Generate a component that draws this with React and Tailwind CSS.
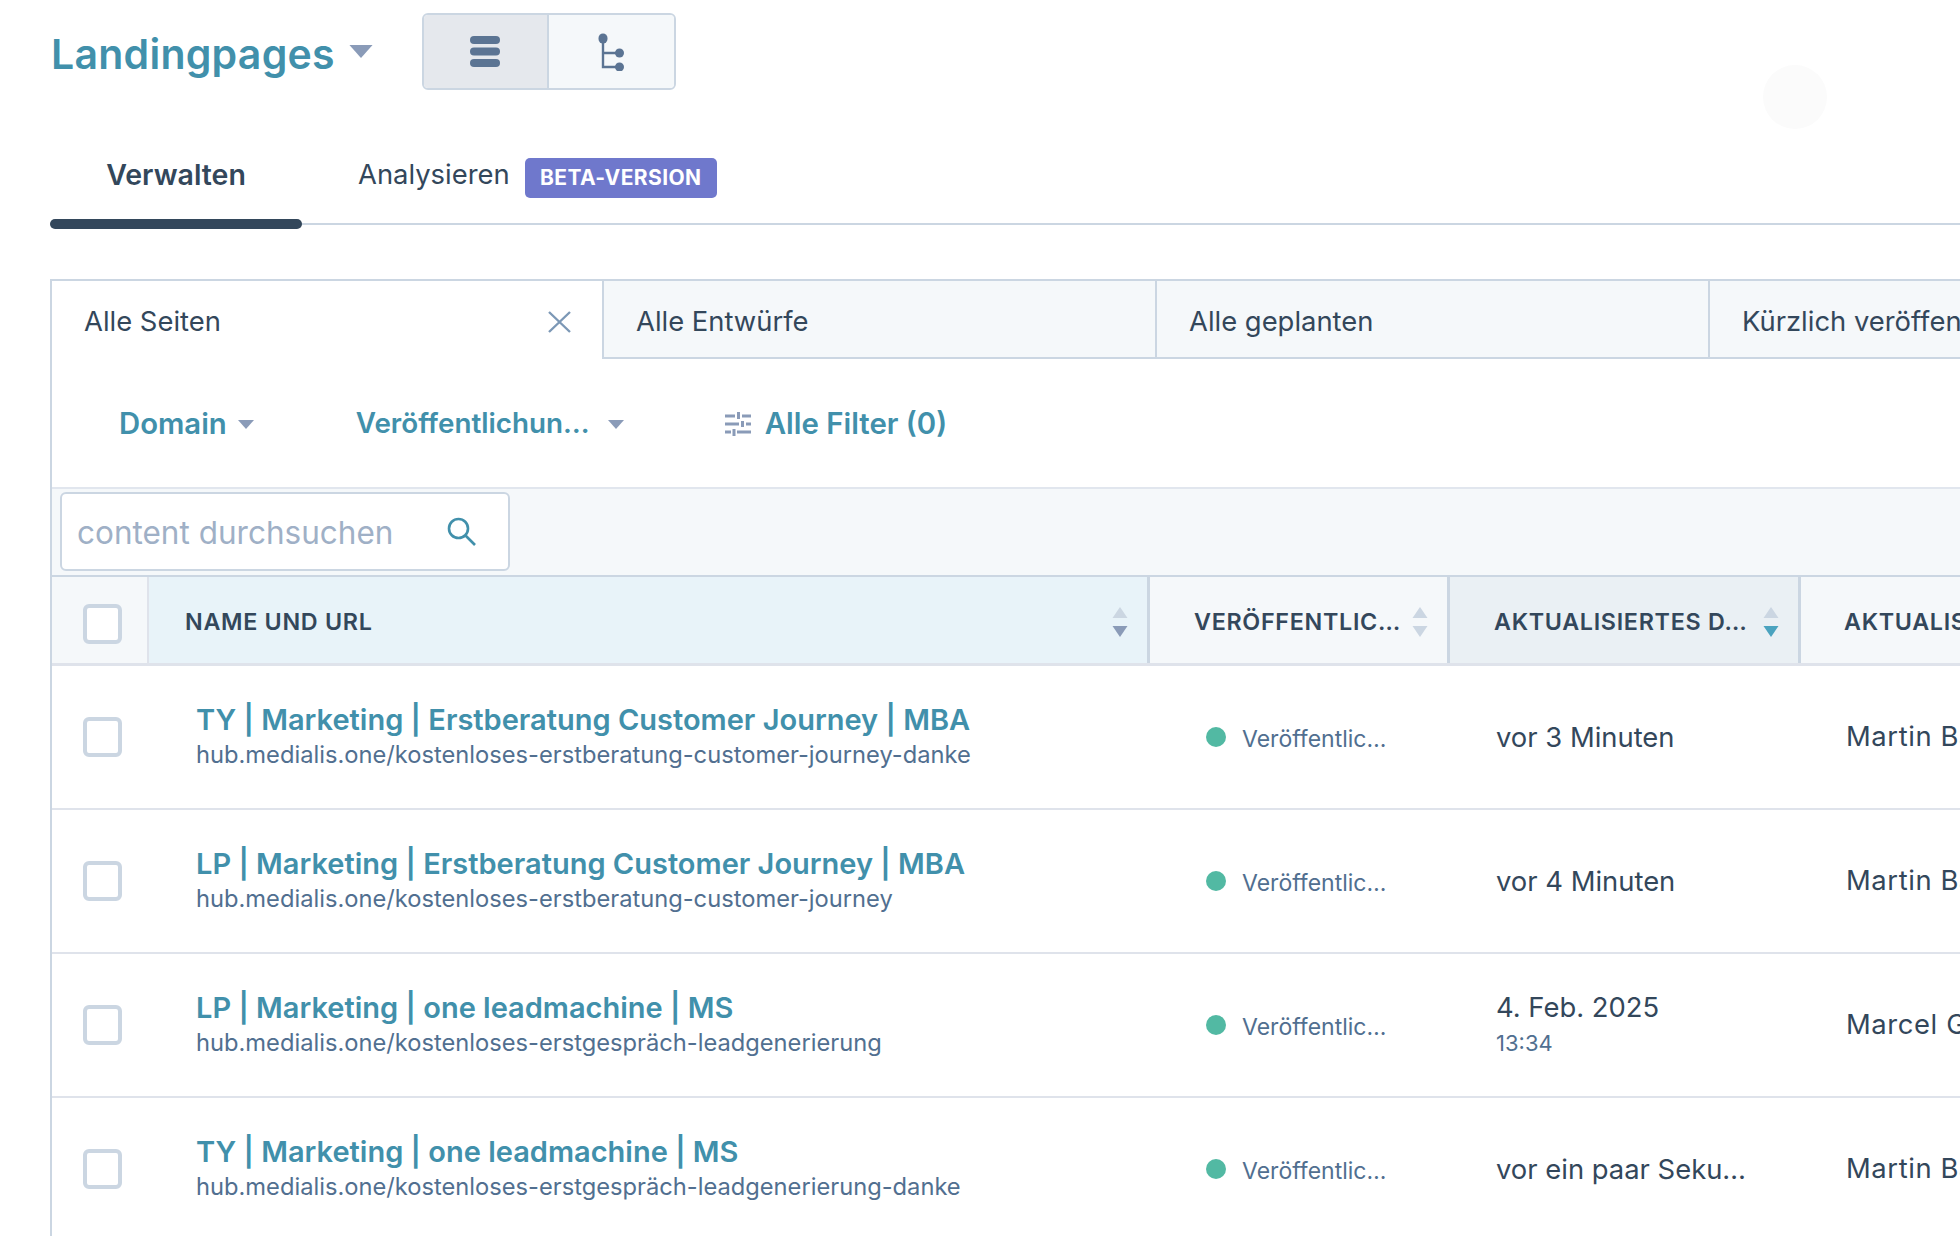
import React from 'react';

const rows = [
  { title: 'TY | Marketing | Erstberatung Customer Journey | MBA', url: 'hub.medialis.one/kostenloses-erstberatung-customer-journey-danke', date: 'vor 3 Minuten', author: 'Martin Bauer' },
  { title: 'LP | Marketing | Erstberatung Customer Journey | MBA', url: 'hub.medialis.one/kostenloses-erstberatung-customer-journey', date: 'vor 4 Minuten', author: 'Martin Bauer' },
  { title: 'LP | Marketing | one leadmachine | MS', url: 'hub.medialis.one/kostenloses-erstgespräch-leadgenerierung', date: '4. Feb. 2025', time: '13:34', author: 'Marcel Graf' },
  { title: 'TY | Marketing | one leadmachine | MS', url: 'hub.medialis.one/kostenloses-erstgespräch-leadgenerierung-danke', date: 'vor ein paar Seku…', author: 'Martin Bauer' },
];

function Caret({ big }) {
  return (
    <svg width={big ? 24 : 16} height={big ? 13 : 9} viewBox="0 0 16 9" className="shrink-0">
      <path d="M0 0h16L8 9z" fill="#8a9bb8" />
    </svg>
  );
}

function SortArrows({ up = '#cbd6e2', down = '#cbd6e2' }) {
  return (
    <svg width="16" height="30" viewBox="0 0 16 30" className="ml-auto mr-[19px] mt-[-1px] shrink-0">
      <path d="M8 0l7.5 11H.5z" fill={up} />
      <path d="M.5 19h15L8 30z" fill={down} />
    </svg>
  );
}

function Checkbox() {
  return <div className="w-[39px] h-[40px] bg-white border-4 border-[#cbd6e2] rounded-[6px]" />;
}

export default function App() {
  return (
    <div className="relative w-[1960px] h-[1236px] overflow-hidden bg-white [font-family:Inter,sans-serif] text-[#33475b]">
      {/* faint circle top right */}
      <div className="absolute left-[1763px] top-[65px] w-[64px] h-[64px] rounded-full bg-[#fbfbfb]" />

      {/* title + view switch */}
      <div className="flex items-center pl-[51px] pt-[13px]">
        <h1 className="h-[77px] pt-[3px] text-[41px] leading-[77px] font-semibold text-[#4190ab] tracking-[0.25px]">Landingpages</h1>
        <span className="ml-[14px] mt-[-1px]"><Caret big /></span>
        <div className="ml-[49px] flex h-[77px] w-[254px] border-2 border-[#cbd6e2] rounded-[6px] overflow-hidden">
          <div className="w-[125px] flex items-center justify-center bg-[#e5e8ed] border-r-2 border-[#cbd6e2]">
            <svg width="30" height="31" viewBox="0 0 30 31">
              <rect x="0" y="0" width="30" height="8" rx="4" fill="#5b7493" />
              <rect x="0" y="11.5" width="30" height="8" rx="4" fill="#5b7493" />
              <rect x="0" y="23" width="30" height="8" rx="4" fill="#5b7493" />
            </svg>
          </div>
          <div className="flex-1 flex items-center justify-center bg-[#f5f8fa]">
            <svg width="28" height="38" viewBox="0 0 28 38">
              <path d="M6 5v29h16M6 20h16" fill="none" stroke="#5b7493" strokeWidth="2.4" />
              <rect x="1.5" y="0.5" width="9" height="10" rx="4.5" fill="#5b7493" />
              <circle cx="22.5" cy="20" r="4.5" fill="#5b7493" />
              <circle cx="22.5" cy="34" r="4.5" fill="#5b7493" />
            </svg>
          </div>
        </div>
      </div>

      {/* tabs */}
      <div className="relative ml-[50px] mt-[42px] h-[93px] flex items-center pb-[5px] border-b-2 border-[#cbd6e2]">
        <div className="relative w-[252px] text-center text-[28.5px] font-semibold">
          Verwalten
          <div className="absolute left-0 top-[65px] w-[252px] h-[10px] rounded-[5px] bg-[#33475b]" />
        </div>
        <div className="ml-[56px] text-[27.4px]">Analysieren</div>
        <div className="ml-[15px] mt-[5px] w-[192px] h-[40px] flex items-center justify-center rounded-[5px] bg-[#6f78cc] text-white text-[21px] font-bold tracking-[0.4px]">BETA-VERSION</div>
      </div>

      <div className="ml-[50px] mt-[54px] border-l-2 border-t-2 border-[#cbd6e2]">
        {/* saved views */}
        <div className="flex h-[78px] text-[27.4px]">
          <div className="w-[552px] shrink-0 flex items-center pl-[32px] pr-[31px] pt-[4px] border-r-2 border-[#cbd6e2] bg-white">
            Alle Seiten
            <svg width="23" height="22" viewBox="0 0 23 22" className="ml-auto">
              <path d="M1 1l21 20M22 1L1 21" stroke="#7c98b6" strokeWidth="2.4" />
            </svg>
          </div>
          <div className="w-[553px] shrink-0 flex items-center pl-[32px] pt-[6px] bg-[#f5f8fa] border-r-2 border-b-2 border-[#cbd6e2]">Alle Entwürfe</div>
          <div className="w-[553px] shrink-0 flex items-center pl-[32px] pt-[6px] bg-[#f5f8fa] border-r-2 border-b-2 border-[#cbd6e2]">Alle geplanten</div>
          <div className="flex-1 flex items-center pl-[32px] pt-[6px] bg-[#f5f8fa] border-b-2 border-[#cbd6e2] whitespace-nowrap overflow-hidden">Kürzlich veröffentlicht</div>
        </div>

        {/* filters */}
        <div className="h-[130px] flex items-center pl-[67px] pt-[2px] border-b-2 border-[#e1e6ee] font-semibold text-[#4190ab]">
          <span className="text-[29.3px]">Domain</span>
          <span className="ml-[11px]"><Caret /></span>
          <span className="ml-[102px] text-[27.8px]">Veröffentlichun…</span>
          <span className="ml-[18px]"><Caret /></span>
          <svg width="26" height="24" viewBox="0 0 26 24" className="ml-[101px]">
            <g stroke="#8a9bb8" strokeWidth="3" fill="none">
              <path d="M0 4h10M17 4h9M13.5 0v7M0 12h14M21 12h5M17.5 9v6M0 20h6M12 20h14M9 17v7" />
            </g>
          </svg>
          <span className="ml-[14px] text-[29.4px]">Alle Filter (0)</span>
        </div>

        {/* search */}
        <div className="h-[88px] flex items-center pl-[8px] pb-[1px] bg-[#f5f8fa] border-b-2 border-[#cbd6e2]">
          <div className="w-[450px] h-[79px] flex items-center pl-[15px] bg-white border-2 border-[#cbd6e2] rounded-[6px]">
            <span className="pt-[3px] text-[31.5px] text-[#9fb0c6]">content durchsuchen</span>
            <svg width="29" height="29" viewBox="0 0 29 29" className="ml-auto mr-[32px]">
              <circle cx="11.5" cy="11.5" r="9.5" fill="none" stroke="#4190ab" strokeWidth="2.6" />
              <path d="M18.5 18.5L28 28" stroke="#4190ab" strokeWidth="2.6" />
            </svg>
          </div>
        </div>

        {/* table head */}
        <div className="flex h-[89px] border-b-[3px] border-[#dfe3eb] text-[23.3px] font-semibold tracking-[0.7px] whitespace-nowrap">
          <div className="w-[97px] shrink-0 flex items-center pl-[31px] pt-[7px] bg-[#f5f8fa] border-r-2 border-[#dfe3eb]">
            <Checkbox />
          </div>
          <div className="w-[1001px] shrink-0 flex items-center pl-[36px] pt-[5px] bg-[#e8f3f9] border-r-[3px] border-[#cbd6e2]">
            NAME UND URL
            <SortArrows down="#8a9bb8" />
          </div>
          <div className="w-[300px] shrink-0 flex items-center pl-[44px] pt-[5px] bg-[#f5f8fa] border-r-[3px] border-[#cbd6e2]">
            VERÖFFENTLIC…
            <SortArrows />
          </div>
          <div className="w-[351px] shrink-0 flex items-center pl-[44px] pt-[5px] bg-[#eaf0f4] border-r-[3px] border-[#cbd6e2]">
            AKTUALISIERTES D…
            <SortArrows down="#4ba3bf" />
          </div>
          <div className="flex-1 flex items-center pl-[43px] pt-[5px] bg-[#f5f8fa] overflow-hidden">AKTUALISIERT VON</div>
        </div>

        {/* rows */}
        {rows.map((row) => (
          <div key={row.title} className="flex h-[144px] border-b-2 border-[#dfe3eb] whitespace-nowrap">
            <div className="w-[96px] shrink-0 flex items-center pl-[31px]">
              <Checkbox />
            </div>
            <div className="w-[1002px] shrink-0 flex flex-col justify-center pl-[48px]">
              <div className="text-[29px] leading-[35px] font-semibold text-[#4190ab]">{row.title}</div>
              <div className="text-[23.7px] leading-[35px] text-[#516f90]">{row.url}</div>
            </div>
            <div className="w-[300px] shrink-0 flex items-center pl-[56px]">
              <span className="w-[20px] h-[20px] rounded-full bg-[#52b9a3]" />
              <span className="ml-[16px] pt-[5px] text-[23px] text-[#516f90]">Veröffentlic…</span>
            </div>
            <div className="w-[351px] shrink-0 flex flex-col justify-center pl-[46px] text-[27.4px]">
              <div className="leading-[35px]">{row.date}</div>
              {row.time && <div className="pt-[1px] text-[22px] leading-[35px] text-[#516f90]">{row.time}</div>}
            </div>
            <div className="flex-1 flex items-center pl-[45px] text-[27.4px] tracking-[0.6px] overflow-hidden">{row.author}</div>
          </div>
        ))}
      </div>
    </div>
  );
}
